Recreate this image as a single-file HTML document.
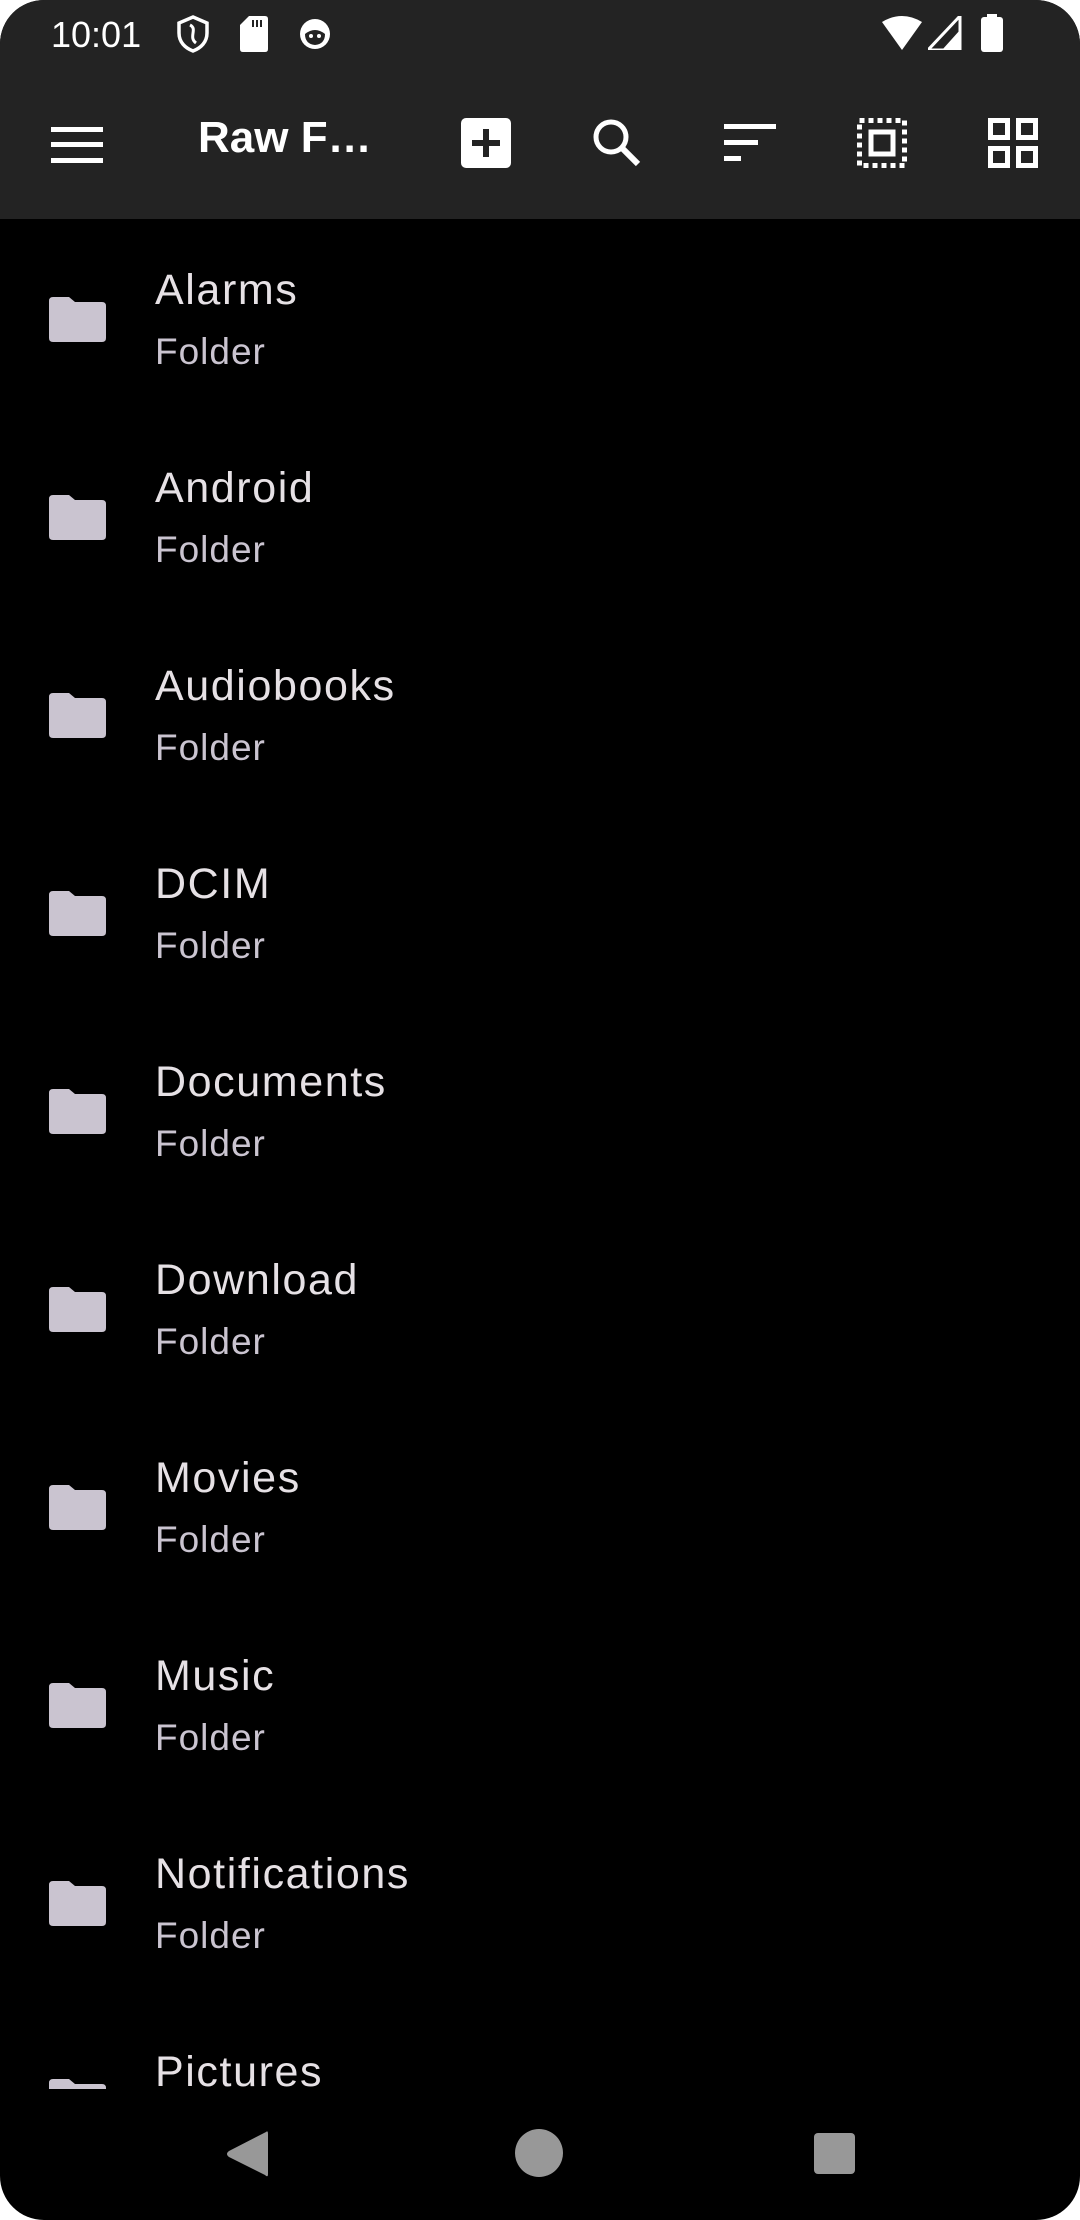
<!DOCTYPE html>
<html><head><meta charset="utf-8"><style>
*{margin:0;padding:0;box-sizing:border-box}
html,body{width:1080px;height:2220px;background:#fff;overflow:hidden}
#phone{position:absolute;left:0;top:0;width:1080px;height:2220px;background:#000;border-radius:44px;overflow:hidden;font-family:"Liberation Sans",sans-serif}
#top{position:absolute;left:0;top:0;width:1080px;height:219px;background:#232323}
.t{position:absolute;color:#fff}
#list{position:absolute;left:0;top:219px;width:1080px;height:1870px;overflow:hidden}
.row{position:absolute;left:0;width:1080px;height:198px}
.row svg{position:absolute;left:49px;top:78px}
.n{position:absolute;left:155px;top:46px;font-size:43px;color:#e6e1e5;letter-spacing:1.6px;line-height:50px}
.s{position:absolute;left:155px;top:111px;font-size:37px;color:#cac4d0;letter-spacing:1px;line-height:44px}
</style></head><body><div id="phone">
<div id="top">
<div class="t" style="left:51px;top:14px;font-size:36px">10:01</div>
<svg style="position:absolute;left:176px;top:15px" width="34" height="38" viewBox="0 0 34 38"><path d="M17 2 L31 8 V18 C31 27 25 33 17 36 C9 33 3 27 3 18 V8 Z" fill="none" stroke="#fff" stroke-width="3.5"/><path d="M14 10 C22 14 12 22 20 28" fill="none" stroke="#fff" stroke-width="3"/></svg>
<svg style="position:absolute;left:240px;top:16px" width="28" height="36"><path d="M9 0 H25 Q28 0 28 3 V33 Q28 36 25 36 H3 Q0 36 0 33 V9 Z" fill="#fff"/><rect x="12" y="4" width="2" height="7" fill="#232323"/><rect x="16" y="4" width="2" height="7" fill="#232323"/><rect x="20" y="4" width="2" height="7" fill="#232323"/></svg>
<svg style="position:absolute;left:298px;top:17px" width="34" height="34"><circle cx="17" cy="17" r="15" fill="#fff"/><path d="M7 17 Q17 9 27 17 Q27 27 17 28 Q7 27 7 17Z" fill="#232323"/><circle cx="13" cy="19" r="2" fill="#fff"/><circle cx="21" cy="19" r="2" fill="#fff"/></svg>
<svg style="position:absolute;left:882px;top:16px" width="40" height="34"><path d="M0 6 Q20 -6 40 6 L20 34Z" fill="#fff"/></svg>
<svg style="position:absolute;left:928px;top:16px" width="34" height="34"><path d="M32 0 V34 H0Z" fill="none" stroke="#fff" stroke-width="3"/><path d="M32 14 V34 H14Z" fill="#fff"/></svg>
<svg style="position:absolute;left:981px;top:14px" width="22" height="38"><rect x="6" y="0" width="10" height="4" fill="#fff"/><rect x="0" y="3" width="22" height="35" rx="3" fill="#fff"/></svg>
<svg style="position:absolute;left:51px;top:127px" width="52" height="36"><rect y="0" width="52" height="5" fill="#fff"/><rect y="15" width="52" height="5" fill="#fff"/><rect y="31" width="52" height="5" fill="#fff"/></svg>
<div class="t" style="left:198px;top:113px;font-size:44px;font-weight:bold;letter-spacing:0">Raw F…</div>
<svg style="position:absolute;left:461px;top:118px" width="50" height="50"><rect width="50" height="50" rx="5" fill="#fff"/><rect x="22" y="11" width="6" height="28" fill="#232323"/><rect x="11" y="22" width="28" height="6" fill="#232323"/></svg>
<svg style="position:absolute;left:592px;top:118px" width="50" height="50"><circle cx="19" cy="19" r="15" fill="none" stroke="#fff" stroke-width="5"/><path d="M30 30 L46 46" stroke="#fff" stroke-width="6"/></svg>
<svg style="position:absolute;left:724px;top:124px" width="52" height="38"><rect x="0" y="0" width="52" height="5" fill="#fff"/><rect x="0" y="16" width="34" height="5" fill="#fff"/><rect x="0" y="32" width="17" height="5" fill="#fff"/></svg>
<svg style="position:absolute;left:857px;top:118px" width="50" height="50"><rect x="2.5" y="2.5" width="45" height="45" fill="none" stroke="#fff" stroke-width="5" stroke-dasharray="5 4"/><rect x="14" y="14" width="22" height="22" fill="none" stroke="#fff" stroke-width="5"/></svg>
<svg style="position:absolute;left:988px;top:118px" width="50" height="50"><g fill="none" stroke="#fff" stroke-width="5"><rect x="2.5" y="2.5" width="17" height="17"/><rect x="30.5" y="2.5" width="17" height="17"/><rect x="2.5" y="30.5" width="17" height="17"/><rect x="30.5" y="30.5" width="17" height="17"/></g></svg>
</div>
<div id="list">
<div class="row" style="top:0"><svg width="57" height="45" viewBox="0 0 57 45"><path d="M4 0 H20 L26 5 H53 Q57 5 57 9 V41 Q57 45 53 45 H4 Q0 45 0 41 V4 Q0 0 4 0Z" fill="#cac4d0"/></svg><div class="n">Alarms</div><div class="s">Folder</div></div>
<div class="row" style="top:198px"><svg width="57" height="45" viewBox="0 0 57 45"><path d="M4 0 H20 L26 5 H53 Q57 5 57 9 V41 Q57 45 53 45 H4 Q0 45 0 41 V4 Q0 0 4 0Z" fill="#cac4d0"/></svg><div class="n">Android</div><div class="s">Folder</div></div>
<div class="row" style="top:396px"><svg width="57" height="45" viewBox="0 0 57 45"><path d="M4 0 H20 L26 5 H53 Q57 5 57 9 V41 Q57 45 53 45 H4 Q0 45 0 41 V4 Q0 0 4 0Z" fill="#cac4d0"/></svg><div class="n">Audiobooks</div><div class="s">Folder</div></div>
<div class="row" style="top:594px"><svg width="57" height="45" viewBox="0 0 57 45"><path d="M4 0 H20 L26 5 H53 Q57 5 57 9 V41 Q57 45 53 45 H4 Q0 45 0 41 V4 Q0 0 4 0Z" fill="#cac4d0"/></svg><div class="n">DCIM</div><div class="s">Folder</div></div>
<div class="row" style="top:792px"><svg width="57" height="45" viewBox="0 0 57 45"><path d="M4 0 H20 L26 5 H53 Q57 5 57 9 V41 Q57 45 53 45 H4 Q0 45 0 41 V4 Q0 0 4 0Z" fill="#cac4d0"/></svg><div class="n">Documents</div><div class="s">Folder</div></div>
<div class="row" style="top:990px"><svg width="57" height="45" viewBox="0 0 57 45"><path d="M4 0 H20 L26 5 H53 Q57 5 57 9 V41 Q57 45 53 45 H4 Q0 45 0 41 V4 Q0 0 4 0Z" fill="#cac4d0"/></svg><div class="n">Download</div><div class="s">Folder</div></div>
<div class="row" style="top:1188px"><svg width="57" height="45" viewBox="0 0 57 45"><path d="M4 0 H20 L26 5 H53 Q57 5 57 9 V41 Q57 45 53 45 H4 Q0 45 0 41 V4 Q0 0 4 0Z" fill="#cac4d0"/></svg><div class="n">Movies</div><div class="s">Folder</div></div>
<div class="row" style="top:1386px"><svg width="57" height="45" viewBox="0 0 57 45"><path d="M4 0 H20 L26 5 H53 Q57 5 57 9 V41 Q57 45 53 45 H4 Q0 45 0 41 V4 Q0 0 4 0Z" fill="#cac4d0"/></svg><div class="n">Music</div><div class="s">Folder</div></div>
<div class="row" style="top:1584px"><svg width="57" height="45" viewBox="0 0 57 45"><path d="M4 0 H20 L26 5 H53 Q57 5 57 9 V41 Q57 45 53 45 H4 Q0 45 0 41 V4 Q0 0 4 0Z" fill="#cac4d0"/></svg><div class="n">Notifications</div><div class="s">Folder</div></div>
<div class="row" style="top:1782px"><svg width="57" height="45" viewBox="0 0 57 45"><path d="M4 0 H20 L26 5 H53 Q57 5 57 9 V41 Q57 45 53 45 H4 Q0 45 0 41 V4 Q0 0 4 0Z" fill="#cac4d0"/></svg><div class="n">Pictures</div><div class="s">Folder</div></div>
</div>
<svg style="position:absolute;left:225px;top:2130px" width="44" height="48"><path d="M41 2 Q43 0 43 4 V44 Q43 48 40 45 L4 27 Q0 24 4 21Z" fill="#989898"/></svg>
<div style="position:absolute;left:515px;top:2129px;width:48px;height:48px;border-radius:50%;background:#989898"></div>
<div style="position:absolute;left:814px;top:2133px;width:41px;height:41px;border-radius:4px;background:#989898"></div>
</div></body></html>
